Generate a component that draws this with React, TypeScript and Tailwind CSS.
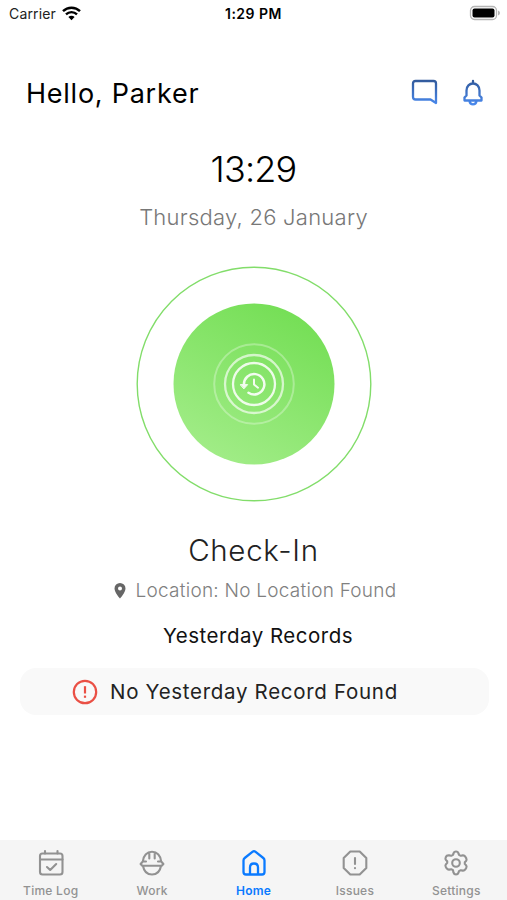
import React from "react";

interface TabProps {
  label: string;
  active?: boolean;
  children: React.ReactNode;
}

const Tab: React.FC<TabProps> = ({ label, active, children }) => (
  <button type="button" className={`flex flex-1 flex-col items-center pt-[9px] ${active ? "text-[#0a7aff]" : "text-[#929292]"}`}>
    <svg width="28" height="28" viewBox="0 0 28 28" fill="none" stroke="currentColor" strokeWidth="2.1" strokeLinecap="round" strokeLinejoin="round">
      {children}
    </svg>
    <span className={`mt-[6px] text-[12px] leading-4 tracking-[0.25px] whitespace-nowrap ${active ? "font-semibold" : "font-medium"}`}>{label}</span>
  </button>
);

const StatusBar = () => (
  <div className="flex h-[27px] items-center justify-between pl-[9px] pr-[6px] text-[14px] text-[#222]">
    <div className="flex flex-1 items-center gap-[6px]">
      <span className="tracking-[0.15px]">Carrier</span>
      <svg className="-mt-[1px]" width="19" height="15" viewBox="0 0 19 15" fill="none" stroke="#000" strokeWidth="2.4">
        <path d="M1 5.2a12.2 12.2 0 0 1 17 0" />
        <path d="M4 8.4a7.9 7.9 0 0 1 11 0" />
        <path d="M6.4 11a4.4 4.4 0 0 1 6.2 0L9.5 14.2z" fill="#000" stroke="none" />
      </svg>
    </div>
    <span className="pr-[3px] font-semibold tracking-[0.5px] text-black">1:29 PM</span>
    <div className="flex flex-1 justify-end">
      <svg className="-mt-[1px]" width="32" height="16" viewBox="0 0 32 16">
        <rect x="1.5" y="1.5" width="26" height="13" rx="4" fill="#fff" stroke="#b5b5b5" strokeWidth="1.3" />
        <rect x="3.5" y="3.5" width="22" height="9" rx="2" fill="#000" />
        <path d="M29 5.5q2 .8 2 2.5t-2 2.5z" fill="#b5b5b5" />
      </svg>
    </div>
  </div>
);

const Header = () => (
  <header className="mt-[46px] flex h-10 items-center pl-[26px] pr-[22px]">
    <h1 className="flex-1 pt-[2px] text-[27px] font-normal tracking-[0.75px] whitespace-nowrap">Hello, Parker</h1>
    <svg width="74" height="28" viewBox="0 0 74 28" fill="none" stroke="url(#blue)" strokeWidth="2.3" strokeLinejoin="round">
      <defs>
        <linearGradient id="blue" gradientUnits="userSpaceOnUse" x1="0" y1="0" x2="0" y2="28">
          <stop offset="0" stopColor="#315898" />
          <stop offset="1" stopColor="#4b8df5" />
        </linearGradient>
      </defs>
      <path d="M4.5 2h18q2.500 0 2.500 2.500v19.500L19.500 20.500H4.500Q2 20.500 2 18V4.500Q2 2 4.500 2z" />
      <path d="M53.500 21.500v-3l2-2v-5C55.500 7.300 58.500 4.500 62 4.500s6.500 2.800 6.500 7v5l2 2v3zM62 2v2.500M58.500 22c.7 4.500 6.300 4.500 7 0" strokeLinecap="round" />
    </svg>
  </header>
);

const CheckInButton = () => (
  <button type="button" className="mt-[29px] self-center">
    <svg width="236" height="236" viewBox="0 0 236 236" fill="none" stroke="#fff">
      <defs>
        <linearGradient id="green" x1="0.75" y1="0.08" x2="0.28" y2="0.95">
          <stop offset="0" stopColor="#76df57" />
          <stop offset="1" stopColor="#a0ec86" />
        </linearGradient>
      </defs>
      <circle cx="118" cy="118" r="116.8" stroke="#82dd6a" strokeWidth="1.4" />
      <circle cx="118" cy="118" r="80.5" fill="url(#green)" stroke="none" />
      <circle cx="118" cy="118" r="39.8" strokeWidth="2" opacity=".3" />
      <circle cx="118" cy="118" r="29" strokeWidth="2.3" opacity=".65" />
      <circle cx="118" cy="118" r="21" strokeWidth="2.3" opacity=".85" />
      <g opacity=".9" strokeLinecap="round" strokeLinejoin="round">
        <path d="M108 119a10.2 10.2 0 1 1 4.500 7.700" strokeWidth="2.5" />
        <path d="M104.500 118.600h7.200l-3.600 4z" fill="#fff" strokeWidth="1" />
        <path d="M118 113.500v5l4 3.200" strokeWidth="2" />
      </g>
    </svg>
  </button>
);

export default function App() {
  return (
    <div className="flex h-[900px] w-[507px] flex-col overflow-hidden bg-white font-['Inter','Liberation_Sans',sans-serif] text-black">
      <StatusBar />
      <Header />

      <div className="mt-[33px] flex h-[46px] items-center justify-center text-[36px] font-light tracking-[-0.8px]">13:29</div>
      <div className="mt-[9px] flex h-[32px] items-center justify-center text-[22px] font-light tracking-[0.25px] text-[#777]">Thursday, 26 January</div>

      <div className="flex flex-col pt-[4px]">
        <CheckInButton />
      </div>

      <div className="mt-[28px] flex h-10 items-center justify-center text-[29.5px] font-light tracking-[0.7px] text-[#222]">Check-In</div>
      <div className="mt-[7px] flex h-7 items-center justify-center gap-[10px] pl-[3px] text-[19px] font-light text-[#808080]">
        <svg width="12" height="16" viewBox="0 0 12 16">
          <path fillRule="evenodd" d="M6 0a5.5 5.5 0 0 0-5.500 5.500C.5 9.500 6 15.500 6 15.500s5.500-6 5.500-10A5.500 5.500 0 0 0 6 0zm0 3.600a2 2 0 1 1 0 4 2 2 0 0 1 0-4z" fill="#666" />
        </svg>
        <span className="whitespace-nowrap tracking-[0.25px]">Location: No Location Found</span>
      </div>
      <h2 className="mt-[15px] pl-[9px] text-center text-[20.5px] leading-8 tracking-[0.5px] text-[#111]">Yesterday Records</h2>

      <div className="ml-[20px] mr-[18px] mt-[16px] flex h-[47px] items-center gap-[12px] rounded-2xl bg-[#f9f9f9] pl-[52px] text-[20.5px] text-[#222]">
        <svg width="26" height="26" viewBox="0 0 26 26" fill="none" stroke="#ea5045">
          <circle cx="13" cy="13" r="11.2" strokeWidth="2.2" />
          <path d="M13 7.200v7.300" strokeWidth="2.2" />
          <path d="M13 16.600v2.200" strokeWidth="2.2" />
        </svg>
        <span className="pt-[2px] whitespace-nowrap tracking-[0.7px]">No Yesterday Record Found</span>
      </div>

      <nav className="mt-auto flex h-[60px] bg-[#f5f5f5]">
        <Tab label="Time Log">
          <rect x="3" y="4.5" width="22.5" height="21" rx="2.5" />
          <path d="M3 10.500h22.500M8 2v2.500M20.500 2v2.500M10 18l3.200 3 6-6" />
        </Tab>
        <Tab label="Work">
          <path d="M4.800 12.500C5.200 6.500 9 2.800 14 2.800s8.800 3.700 9.200 9.700l2.200 2.500-1.700 1.800H4.300L2.600 15zM5 17c1 5.500 4.500 8.500 9 8.500s8-3 9-8.500M11.300 3.800v5.700M16.700 3.800v5.700M4.800 12.500H8M20 12.500h3.200" />
        </Tab>
        <Tab label="Home" active>
          <path d="M3.500 11.500q0-1.600 1.200-2.500l8-6.300q1.300-1 2.600 0l8 6.300q1.200 1 1.200 2.500V23q0 2.500-2.500 2.500H6Q3.500 25.500 3.500 23zM10 25v-6.500q0-4 4-4t4 4V25" strokeWidth="2.3" />
        </Tab>
        <Tab label="Issues">
          <path d="M9.300 2.500h9.400l6.600 6.600v9.800l-6.600 6.600H9.300l-6.600-6.600V9.100zM14 9v6M14 19v.2" />
        </Tab>
        <Tab label="Settings">
          <path d="M11.500 4.500Q12 2.500 14 2.500t2.500 2l.5 1.300 1.800 1 2-.4q1.500-.2 2.500 1.300l1 1.700q.7 1.400-.3 2.600l-1.200 1.200v1.700l1.200 1.300q1 1.200.3 2.500l-1 1.700q-1 1.400-2.500 1.200l-2-.4-1.800 1-.5 1.500q-.6 1.800-2.500 1.800t-2.500-1.800L11 21.200l-1.800-1-2 .4q-1.500.2-2.500-1.200l-1-1.700q-.7-1.300.3-2.500l1.200-1.300v-1.700L4 11q-1-1.200-.3-2.600l1-1.700Q5.700 6.200 7.200 6.400l2 .4 1.800-1z" />
          <circle cx="14" cy="14" r="3.8" />
        </Tab>
      </nav>
    </div>
  );
}
